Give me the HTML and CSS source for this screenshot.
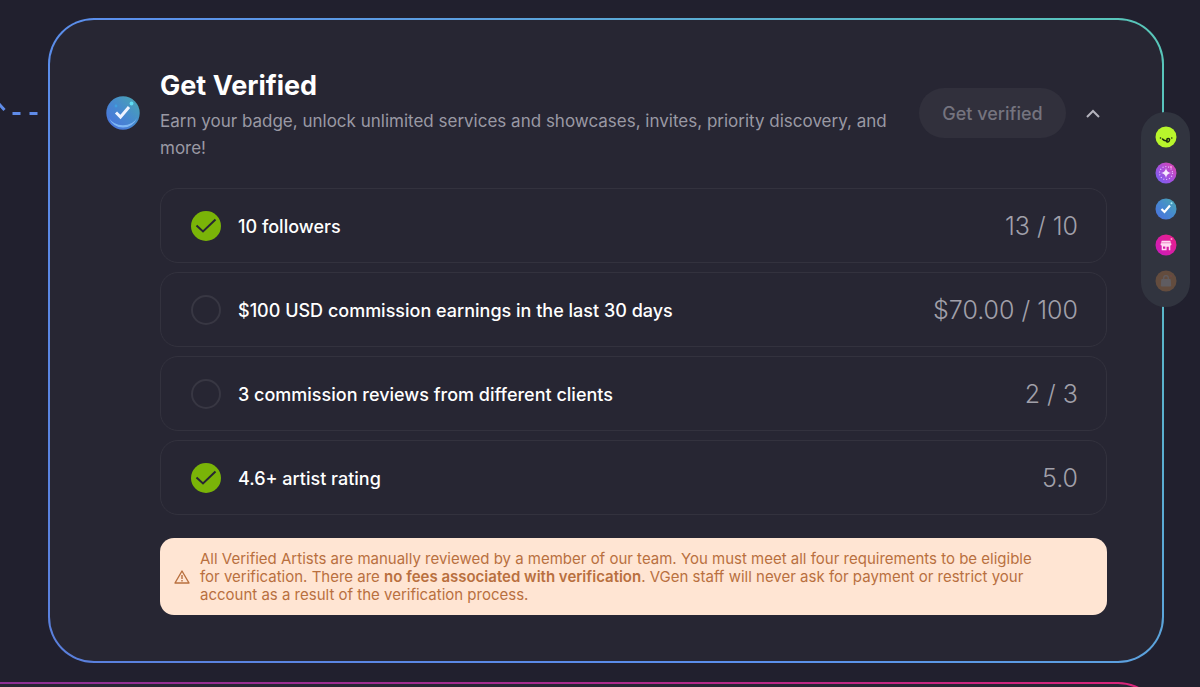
FILE: index.html
```
<!DOCTYPE html>
<html lang="en">
<head>
    <meta charset="UTF-8">
    <meta name="viewport" content="width=device-width, initial-scale=1.0">
    <title>Get Verified</title>
    <link rel="stylesheet" href="styles.css">
</head>
<body>

    <!-- Shared gradients for the badges -->
    <svg class="defs" width="0" height="0" aria-hidden="true">
        <defs>
            <linearGradient id="blueGrad" x1="0" y1="1" x2="1" y2="0">
                <stop offset="0" stop-color="#4b6fe0"/>
                <stop offset="0.5" stop-color="#4689cf"/>
                <stop offset="1" stop-color="#4aa8ae"/>
            </linearGradient>
            <linearGradient id="purpleGrad" x1="0" y1="1" x2="1" y2="0">
                <stop offset="0" stop-color="#6c63f5"/>
                <stop offset="0.5" stop-color="#a94fdc"/>
                <stop offset="1" stop-color="#e044a8"/>
            </linearGradient>
            <linearGradient id="pinkGrad" x1="0" y1="1" x2="1" y2="0">
                <stop offset="0" stop-color="#c81bc0"/>
                <stop offset="1" stop-color="#ec2086"/>
            </linearGradient>
            <symbol id="verifiedBadge" viewBox="0 0 34 34">
                <circle cx="17" cy="17" r="16.700" fill="url(#blueGrad)"/>
                <path d="M3 22a15 15 0 0 0 28 0a15.500 12.500 0 0 1-28 0z" fill="#7fb8f5"/>
                <circle cx="25.500" cy="7.500" r="1.900" fill="#5fdcf2"/>
                <circle cx="10" cy="10" r="1.400" fill="#3fa0e0"/>
                <path d="M10 16.500l4.500 4.500 8.500-10" fill="none" stroke="#eef3ff" stroke-width="3"/>
            </symbol>
        </defs>
    </svg>

    <main class="steps">
        <!-- Verification Step -->
        <section class="step step-verified">
            <svg class="connector" viewBox="0 0 50 20" aria-hidden="true">
                <path d="M-1 7l5.500 6M12.500 16.500h8M29.500 16.500h8"/>
            </svg>

            <div class="step-header">
                <svg class="step-icon" aria-hidden="true"><use href="#verifiedBadge"/></svg>
                <div class="step-text">
                    <h2>Get Verified</h2>
                    <p>Earn your badge, unlock unlimited services and showcases, invites, priority discovery, and more!</p>
                </div>
                <button class="btn-verify" type="button" disabled>Get verified</button>
                <button class="btn-toggle" type="button" aria-label="Collapse">
                    <svg viewBox="0 0 14 9" aria-hidden="true"><path d="M1 8l6-6 6 6"/></svg>
                </button>
            </div>

            <div class="step-body">
                <!-- Requirements -->
                <ul class="requirements">
                    <li>
                        <svg class="status done" viewBox="0 0 30 30" aria-hidden="true"><circle cx="15" cy="15" r="15"/><path d="M5.500 14.500l6.500 6L24.500 8.500"/></svg>
                        <span class="label">10 followers</span>
                        <span class="value">13 / 10</span>
                    </li>
                    <li>
                        <svg class="status" viewBox="0 0 30 30" aria-hidden="true"><circle cx="15" cy="15" r="14"/></svg>
                        <span class="label">$100 USD commission earnings in the last 30 days</span>
                        <span class="value">$70.00 / 100</span>
                    </li>
                    <li>
                        <svg class="status" viewBox="0 0 30 30" aria-hidden="true"><circle cx="15" cy="15" r="14"/></svg>
                        <span class="label">3 commission reviews from different clients</span>
                        <span class="value">2 / 3</span>
                    </li>
                    <li>
                        <svg class="status done" viewBox="0 0 30 30" aria-hidden="true"><circle cx="15" cy="15" r="15"/><path d="M5.500 14.500l6.500 6L24.500 8.500"/></svg>
                        <span class="label">4.6+ artist rating</span>
                        <span class="value">5.0</span>
                    </li>
                </ul>

                <!-- Notice -->
                <div class="notice">
                    <svg viewBox="0 0 16 14" aria-hidden="true"><path d="M8 1L15 13H1z"/><path d="M8 5v4M8 10v1.500"/></svg>
                    <p>All Verified Artists are manually reviewed by a member of our team. You must meet all four requirements to be eligible for verification. There are <strong>no fees associated with verification</strong>. VGen staff will never ask for payment or restrict your account as a result of the verification process.</p>
                </div>
            </div>
        </section>

        <!-- Next Step -->
        <section class="step step-next"></section>
    </main>

    <!-- Progress Rail -->
    <nav class="rail" aria-label="Steps">
        <a href="#start" aria-label="Getting started">
            <svg viewBox="0 0 22 22">
                <circle cx="11" cy="11" r="10.500" fill="#b8f52c"/>
                <circle cx="5.500" cy="12" r="0.800" fill="#1b2a10"/>
                <circle cx="16.800" cy="12" r="0.800" fill="#1b2a10"/>
                <path d="M7.500 13q2 2.500 4.500 1.500q-0.500-2 1.200-2t1.300 1.500q-0.300 2.500-2.800 1.800" fill="none" stroke="#1b2a10" stroke-width="1.500" stroke-linecap="round"/>
            </svg>
        </a>
        <a href="#glow" aria-label="Profile">
            <svg viewBox="0 0 22 22">
                <circle cx="11" cy="11" r="10.500" fill="url(#purpleGrad)"/>
                <circle cx="11" cy="11" r="6.500" fill="none" stroke="#e9c8ff" stroke-width="1.200" stroke-dasharray="1 1.920"/>
                <path d="M11 6q0.700 4.300 5 5q-4.300 0.700-5 5q-0.700-4.300-5-5q4.300-0.700 5-5z" fill="#f6eaff"/>
                <circle cx="16" cy="5" r="1" fill="#ff9ae0"/>
            </svg>
        </a>
        <a href="#verified" aria-label="Get verified">
            <svg viewBox="0 0 22 22">
                <circle cx="11" cy="11" r="10.500" fill="url(#blueGrad)"/>
                <path d="M6.500 11l3 3 5.500-6.500" fill="none" stroke="#fff" stroke-width="2.200"/>
                <circle cx="16.500" cy="5.300" r="1" fill="#a5ecf8"/>
            </svg>
        </a>
        <a href="#shop" aria-label="Shop">
            <svg viewBox="0 0 22 22">
                <circle cx="11" cy="11" r="10.500" fill="url(#pinkGrad)"/>
                <path d="M6.700 6.800h8.600l1.200 3.700q-0.300 1-1.200 1v4.800h-1.500v-3.600h-2.200v3.600H6.700v-4.800q-0.900 0-1.200-1zM8 12.500v2.200h2.300v-2.200z" fill="#ffd9f2" fill-rule="evenodd"/>
                <path d="M6 8.800h10" stroke="#e04aa8" stroke-width="0.600"/>
                <circle cx="16.500" cy="5" r="1" fill="#ff9ad0"/>
            </svg>
        </a>
        <a class="locked" href="#locked" aria-label="Locked step">
            <svg viewBox="0 0 22 22">
                <circle cx="11" cy="11" r="10.500" fill="#d8843c"/>
                <path d="M6.800 9.500h8.400l0.500 6.500H6.300z" fill="#c9b8b0" stroke="#c9b8b0" stroke-linejoin="round"/>
                <path d="M8.700 9.500V8a2.300 2.300 0 0 1 4.600 0v1.500" fill="none" stroke="#c9b8b0" stroke-width="1.200"/>
                <circle cx="16" cy="6" r="1" fill="#ff7a50"/>
            </svg>
        </a>
    </nav>

</body>
</html>
```
FILE: styles.css
```
/* General Styles */
* {
    box-sizing: border-box;
}

body {
    font-family: Inter, sans-serif;
    margin: 0;
    background-color: #21202e;
    color: #fff;
    overflow-x: hidden;
}

h2, p, ul {
    margin: 0;
    padding: 0;
}

.defs {
    position: absolute;
}

/* Step Cards */
.steps {
    display: flex;
    flex-direction: column;
    gap: 19px;
    height: 100vh;
    padding: 18px 36px 0 48px;
    overflow: hidden;
}

.step {
    position: relative;
    flex: none;
    border: 2px solid transparent;
    border-radius: 46px;
}

.step-verified {
    padding: 44px 55px 46px 56px;
    background: linear-gradient(#272633, #272633) padding-box,
                linear-gradient(45deg, #5a7fdc, #5b8fec 40%, #5c9fe0 60%, #58c8b8) border-box;
}

.step-next {
    height: 120px;
    margin-left: -96px;
    background: linear-gradient(#272633, #272633) padding-box,
                linear-gradient(90deg, #8a3296, #a82c8e 50%, #dc2478) border-box;
}

.connector {
    position: absolute;
    left: -50px;
    top: 77px;
    width: 50px;
    height: 20px;
    fill: none;
    stroke: #5f8be8;
    stroke-width: 3px;
}

.step-header {
    display: flex;
    align-items: center;
}

.step-icon {
    flex: none;
    width: 34px;
    height: 34px;
    margin-right: 20px;
}

.step-text {
    flex: 1;
    padding-top: 5px;
}

.step-text h2 {
    font-size: 27px;
    line-height: 34px;
    font-weight: 700;
}

.step-text p {
    margin-top: 5px;
    font-size: 17px;
    line-height: 27px;
    color: #9a99a4;
}

.btn-verify {
    flex: none;
    width: 147px;
    height: 50px;
    margin-left: 28px;
    border: none;
    border-radius: 25px;
    background-color: #31303c;
    color: #75747f;
    font-family: inherit;
    font-size: 18px;
    font-weight: 500;
}

.btn-toggle {
    display: flex;
    justify-content: center;
    width: 28px;
    margin: 0 0 0 13px;
    padding: 8px 0;
    border: none;
    background: none;
    cursor: pointer;
}

.btn-toggle svg {
    width: 14px;
    height: 9px;
    fill: none;
    stroke: #b4b3bd;
    stroke-width: 2px;
}

/* Requirements */
.step-body {
    margin: 26px 0 0 54px;
}

.requirements {
    display: flex;
    flex-direction: column;
    gap: 9px;
    list-style: none;
}

.requirements li {
    display: flex;
    align-items: center;
    height: 75px;
    padding: 0 28px 0 30px;
    border: 1px solid #33323e;
    border-radius: 18px;
}

.status {
    width: 30px;
    height: 30px;
    margin-right: 17px;
    fill: none;
    stroke: #383743;
    stroke-width: 2px;
}

.status.done circle {
    fill: #7ab408;
    stroke: none;
}

.status.done path {
    stroke: #272633;
}

.label {
    flex: 1;
    padding-top: 2px;
    font-size: 18px;
    font-weight: 500;
}

.value {
    font-size: 25px;
    font-weight: 300;
    color: #a1a0aa;
}

/* Notice */
.notice {
    display: flex;
    align-items: center;
    gap: 10px;
    margin-top: 23px;
    padding: 12px 68px 11px 14px;
    border-radius: 14px;
    background-color: #ffe5d3;
    color: #b9703f;
}

.notice svg {
    flex: none;
    width: 16px;
    height: 14px;
    fill: none;
    stroke: #b9703f;
    stroke-width: 1.4px;
    stroke-linejoin: round;
}

.notice p {
    font-size: 15px;
    line-height: 18px;
}

.notice strong {
    font-weight: 600;
}

/* Progress Rail */
.rail {
    position: fixed;
    top: 112px;
    right: 10px;
    display: flex;
    flex-direction: column;
    align-items: center;
    gap: 14px;
    width: 49px;
    padding: 14px 0 15px;
    border-radius: 25px;
    background-color: #31343f;
}

.rail a,
.rail svg {
    display: block;
    width: 22px;
    height: 22px;
}

.rail .locked {
    opacity: 0.3;
}
```
